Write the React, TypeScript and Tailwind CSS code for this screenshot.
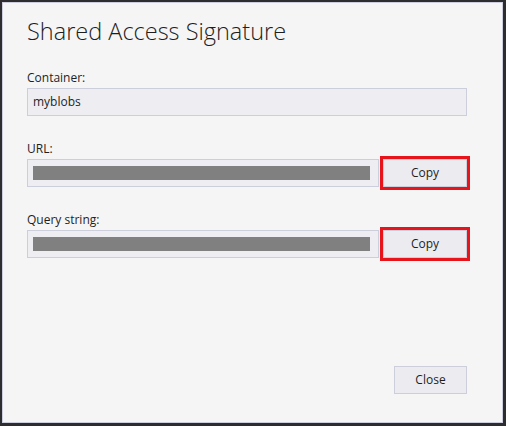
import React from 'react';

const font = { fontFamily: '"Open Sans", "Noto Sans", sans-serif' };

function CopyRow({ label, top }: { label: string; top: string }) {
    return (
        <div className={top}>
            <div className="text-[12px] leading-[16px] text-[#1e1e1e]">{label}</div>
            <div className="mt-[2px] flex items-center">
                <div className="flex h-[28px] w-[352px] items-center border border-[#cccedb] bg-[#eeeef2] px-[5px]">
                    <div className="h-[14px] w-[337px] bg-[#808080]" />
                </div>
                <button className="ml-[4px] h-[28px] w-[84px] border border-[#cccedb] bg-[#ececf0] text-[12px] text-[#1e1e1e] outline-3 outline-[#e8141c]">
                    Copy
                </button>
            </div>
        </div>
    );
}

export default function App() {
    return (
        <div className="h-[426px] w-[506px] bg-[#2d2d30] pt-[2px] pr-[3px] pb-[3px] pl-[2px]" style={font}>
            <div className="flex h-full flex-col border border-[#cccedb] bg-[#f5f5f5] pl-[24px]">
                <h1 className="mt-[12px] text-[23.5px] font-light leading-[32px] text-[#1e1e1e]">Shared Access Signature</h1>

                <div className="mt-[23px]">
                    <div className="text-[12px] leading-[16px] text-[#1e1e1e]">Container:</div>
                    <div className="mt-[2px] flex h-[28px] w-[440px] items-center border border-[#cccedb] bg-[#eeeef2] px-[5px] text-[12px] text-[#1e1e1e]">
                        myblobs
                    </div>
                </div>

                <CopyRow label="URL:" top="mt-[25px]" />
                <CopyRow label="Query string:" top="mt-[25px]" />

                <div className="mt-auto mb-[28px] flex w-[440px] justify-end">
                    <button className="h-[28px] w-[73px] border border-[#cccedb] bg-[#ececf0] text-[12px] text-[#1e1e1e]">
                        Close
                    </button>
                </div>
            </div>
        </div>
    );
}
